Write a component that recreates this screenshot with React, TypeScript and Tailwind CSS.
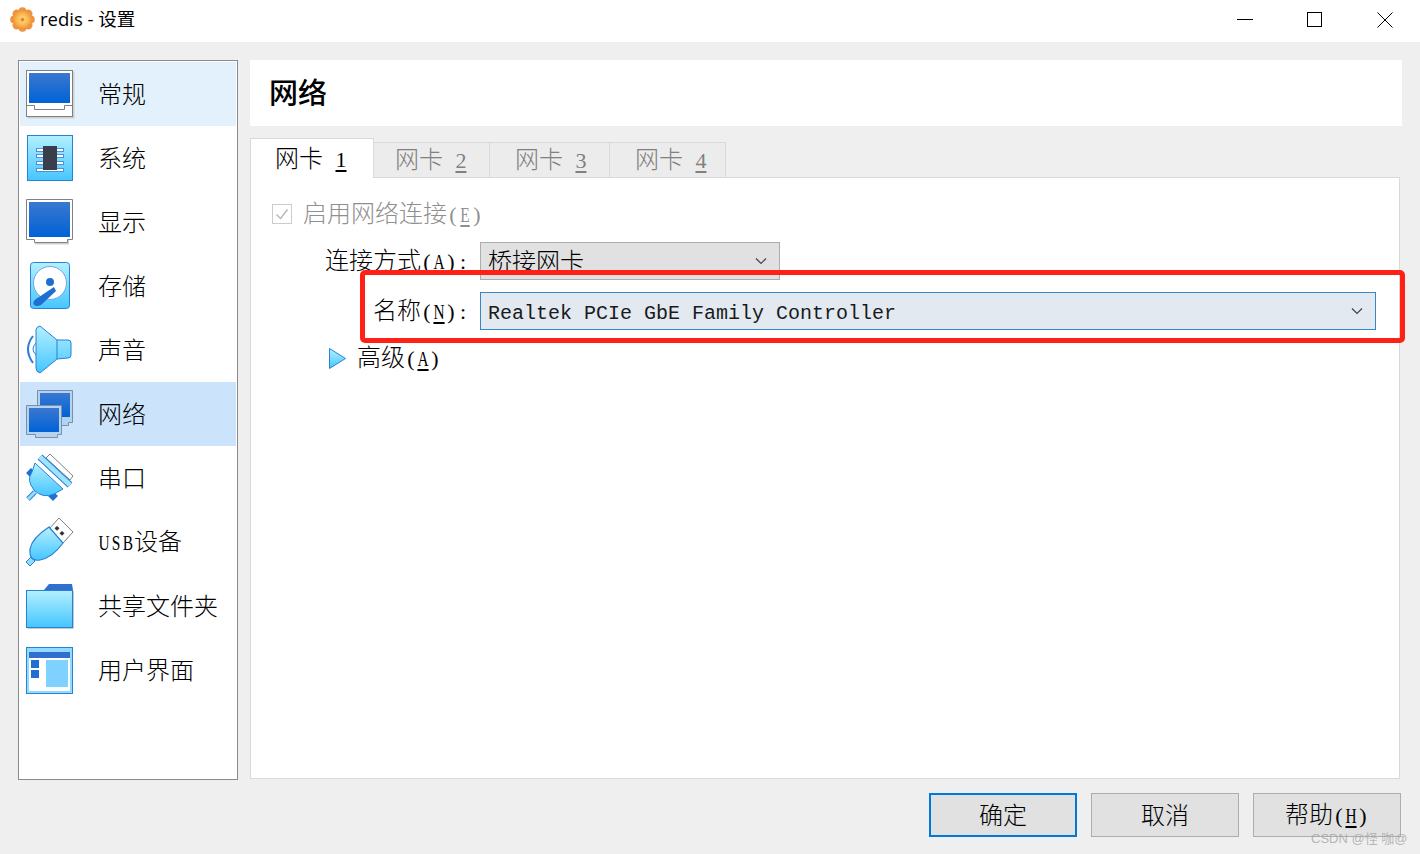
import type { ReactNode } from "react";

const cjk = "font-['Noto_Sans_CJK_SC',sans-serif] font-light";

// half-width monospaced run, for the combo text
function Mono({ children }: { children: ReactNode }) {
  return <span className="font-['Liberation_Mono',monospace] text-[20px] font-normal text-[#1a1a1a]">{children}</span>;
}

// one half-width serif cell: the reference's parens and letters sit in a 12px slot
function Cell({ children, u, narrow }: { children: ReactNode; u?: boolean; narrow?: boolean }) {
  return (
    <span
      className={`inline-flex justify-center w-[12px] font-['Liberation_Serif',serif] text-[22px] font-normal leading-none ${
        u ? "underline underline-offset-[3px]" : ""
      } ${narrow ? "scale-x-[0.7]" : ""}`}
    >
      {children}
    </span>
  );
}

function Key({ k }: { k: string }) {
  return (
    <>
      <Cell>(</Cell>
      <Cell u narrow>
        {k}
      </Cell>
      <Cell>)</Cell>
    </>
  );
}

function Chevron() {
  return (
    <svg width="12" height="8" viewBox="0 0 12 8" fill="none" stroke="#444" strokeWidth="1.2">
      <path d="M1 1.5 L6 6.5 L11 1.5" />
    </svg>
  );
}

function Defs() {
  return (
    <svg className="absolute w-0 h-0">
      <defs>
        <linearGradient id="screen" x1="0" y1="0" x2="0" y2="1">
          <stop offset="0" stopColor="#3a78d0" />
          <stop offset="1" stopColor="#0062d6" />
        </linearGradient>
        <linearGradient id="sky" x1="0" y1="0" x2="0" y2="1">
          <stop offset="0" stopColor="#b4f0ff" />
          <stop offset="1" stopColor="#44c6ff" />
        </linearGradient>
        <radialGradient id="gear" cx="0.5" cy="0.5" r="0.55">
          <stop offset="0" stopColor="#ffe08a" />
          <stop offset="0.6" stopColor="#f9b44c" />
          <stop offset="1" stopColor="#ea8a3a" />
        </radialGradient>
      </defs>
    </svg>
  );
}

function Ico({ children }: { children: ReactNode }) {
  return (
    <svg width="52" height="52" viewBox="0 0 52 52" className="shrink-0">
      {children}
    </svg>
  );
}

const icons: Record<string, ReactNode> = {
  general: (
    <Ico>
      <rect x="3.5" y="3.5" width="47" height="47" fill="#cfcfcf" />
      <rect x="2.5" y="2.5" width="46" height="46" fill="#fff" stroke="#808080" />
      <rect x="5" y="5" width="41" height="30" fill="url(#screen)" />
      <path d="M2.5 37.5 H10.5 V41.5 H40.5 V37.5 H48.5" fill="none" stroke="#808080" />
    </Ico>
  ),
  system: (
    <Ico>
      <rect x="3.5" y="3.5" width="45" height="45" fill="url(#sky)" stroke="#2a7fd6" />
      {[16, 22, 29, 36].map((y) => (
        <rect key={y} x="12.5" y={y + 0.5} width="27" height="3" fill="#fff" stroke="#4f8fd8" />
      ))}
      <rect x="19" y="14" width="14" height="24" fill="#3a3e4a" />
    </Ico>
  ),
  display: (
    <Ico>
      <path d="M11 44 V48.5 H45 V44 Z" fill="#cfcfcf" />
      <path d="M2.5 3.5 H48.5 V43.5 H43.5 V46.5 H10.5 V43.5 H2.5 Z" fill="#fff" stroke="#808080" />
      <rect x="5" y="6" width="41" height="35" fill="url(#screen)" />
    </Ico>
  ),
  storage: (
    <Ico>
      <rect x="6.5" y="2.5" width="39" height="46" rx="3" fill="url(#sky)" stroke="#2a7fd6" />
      <circle cx="26" cy="23" r="16.5" fill="#fff" stroke="#6fa8e0" />
      <circle cx="26" cy="22" r="4" fill="#1f6fd0" />
      <path d="M30 27 L32 31 L17 45 Q13 47 10 45 Q8 42 12 39 Z" fill="#1f6fd0" />
    </Ico>
  ),
  audio: (
    <Ico>
      <path d="M9 12 Q-1 25 9 39" fill="none" stroke="#2a7fd6" strokeWidth="2" />
      <path d="M12 19 Q6 25 12 31" fill="none" stroke="#2a7fd6" strokeWidth="1" />
      <path
        d="M16 2 L33 16 H44 Q47 16 47 19 V31 Q47 34 44 34 L33 35 L16 49 Q12 48 12 44 V6 Q12 3 16 2 Z"
        fill="url(#sky)"
        stroke="#2a7fd6"
      />
      <path d="M33 16 V35" stroke="#2a7fd6" />
    </Ico>
  ),
  network: (
    <Ico>
      <path d="M13.5 2.5 H48.5 V34.5 H44.5 V37.5 H13.5 Z" fill="#b3d3f0" stroke="#7a8fa5" />
      <rect x="16" y="5" width="30" height="24" fill="url(#screen)" />
      <path d="M2.5 17.5 H37.5 V46.5 H33.5 V49.5 H11.5 V46.5 H2.5 Z" fill="#b3d3f0" stroke="#7a8fa5" />
      <rect x="5" y="20" width="30" height="24" fill="url(#screen)" />
    </Ico>
  ),
  serial: (
    <Ico>
      <path d="M26 2 L49 24 L46 28 L22 6 Z" fill="#fff" stroke="#808080" />
      <path d="M4 47 L11 40" stroke="#2a7fd6" strokeWidth="5" />
      <path d="M4 47 L11 40" stroke="#8fdcff" strokeWidth="3" />
      <rect x="3.5" y="17.5" width="7" height="7" fill="#1f6fd0" transform="rotate(45 7 21)" />
      <rect x="25.5" y="40.5" width="7" height="7" fill="#1f6fd0" transform="rotate(45 29 44)" />
      <path d="M11 11 L39 37 L30 42 Q19 47 10 38 Q2 28 8 20 Z" fill="url(#sky)" stroke="#2a7fd6" />
      <path d="M16 5 L46 33" stroke="#2a7fd6" strokeWidth="7" />
      <path d="M16 5 L46 33" stroke="#9ee4ff" strokeWidth="5" />
    </Ico>
  ),
  usb: (
    <Ico>
      <path d="M35 2 L49 16 L39 27 L25 13 Z" fill="#fff" stroke="#808080" />
      <rect x="31.5" y="10.5" width="3.5" height="3.5" fill="#333" transform="rotate(45 33 12)" />
      <rect x="36.5" y="15.5" width="3.5" height="3.5" fill="#333" transform="rotate(45 38 17)" />
      <path d="M2 46 L7 41 L11 45 L6 50 Z" fill="#8fdcff" stroke="#2a7fd6" />
      <path d="M25 11 L39 27 Q28 42 16 44 Q5 46 6 33 Q8 22 25 11 Z" fill="url(#sky)" stroke="#2a7fd6" strokeWidth="1.2" />
    </Ico>
  ),
  shared: (
    <Ico>
      <path d="M20 10 L25 4 H48 L49 10 Z" fill="#2f6fd0" />
      <rect x="2.5" y="10.5" width="46" height="37" fill="url(#sky)" stroke="#2a7fd6" />
      <path d="M3.5 48.5 H49.5 V11" fill="none" stroke="#c8c8c8" />
    </Ico>
  ),
  ui: (
    <Ico>
      <rect x="2.5" y="3.5" width="46" height="46" fill="#8fdcff" stroke="#2a7fd6" />
      <rect x="5" y="8" width="41" height="39" fill="#fff" />
      <rect x="5" y="8" width="41" height="6" fill="#2f6fd0" />
      <rect x="7" y="16" width="8" height="8" fill="#1f6fd0" />
      <rect x="7" y="26" width="8" height="8" fill="#1f6fd0" />
      <rect x="22" y="16" width="22" height="27" fill="#7fd1ff" />
    </Ico>
  ),
};

const navItems: { key: string; label: ReactNode; bg?: string }[] = [
  { key: "general", label: "常规", bg: "bg-[#e3f1fc]" },
  { key: "system", label: "系统" },
  { key: "display", label: "显示" },
  { key: "storage", label: "存储" },
  { key: "audio", label: "声音" },
  { key: "network", label: "网络", bg: "bg-[#cce4fb]" },
  { key: "serial", label: "串口" },
  {
    key: "usb",
    label: (
      <>
        <Cell narrow>U</Cell>
        <Cell narrow>S</Cell>
        <Cell narrow>B</Cell>设备
      </>
    ),
  },
  { key: "shared", label: "共享文件夹" },
  { key: "ui", label: "用户界面" },
];

const tabs = [
  { n: "2", w: "w-[116px]", pad: "pl-[21px]" },
  { n: "3", w: "w-[120px]", pad: "pl-[25px]" },
  { n: "4", w: "w-[116px]", pad: "pl-[25px]" },
];

function Combo({ w, focus, children }: { w: string; focus?: boolean; children: ReactNode }) {
  return (
    <div
      className={`${w} h-[38px] flex items-center justify-between pl-[7px] pr-[12px] border ${
        focus ? "bg-[#e2e9f1] border-[#3a87c8]" : "bg-[#e1e1e1] border-[#adadad]"
      }`}
    >
      <span className="text-black leading-none whitespace-pre pb-[2px]">{children}</span>
      <Chevron />
    </div>
  );
}

function Btn({ children, primary }: { children: ReactNode; primary?: boolean }) {
  return (
    <div
      className={`w-[148px] h-[44px] flex items-center justify-center bg-[#e1e1e1] text-black ${
        primary ? "border-2 border-[#0078d7]" : "border border-[#adadad]"
      }`}
    >
      <span className="leading-none pb-[2px]">{children}</span>
    </div>
  );
}

export default function App() {
  return (
    <div className={`relative h-screen w-full overflow-hidden bg-[#efefef] flex flex-col text-[24px] text-black ${cjk}`}>
      <Defs />

      {/* Title bar */}
      <header className="h-[42px] shrink-0 bg-white flex items-center justify-between">
        <div className="flex items-center pl-[10px] gap-[5px] pb-[4px]">
          <svg width="25" height="25" viewBox="0 0 24 24">
            {[0, 45, 90, 135, 180, 225, 270, 315].map((a) => (
              <circle key={a} cx="12" cy="4" r="3.8" fill="#ee9440" transform={`rotate(${a} 12 12)`} />
            ))}
            <circle cx="12" cy="12" r="9" fill="url(#gear)" />
            <circle cx="12" cy="12" r="1.8" fill="#e8842c" />
          </svg>
          <span className="font-['Open_Sans','Noto_Sans_CJK_SC',sans-serif] font-normal text-[18.5px] leading-none text-black">
            redis - 设置
          </span>
        </div>
        <div className="flex pb-[2px]">
          <div className="w-[70px] h-[40px] flex items-center justify-center">
            <svg width="16" height="16" viewBox="0 0 16 16" stroke="#000" fill="none">
              <path d="M0 7.5 H16" />
            </svg>
          </div>
          <div className="w-[70px] h-[40px] flex items-center justify-center">
            <svg width="16" height="16" viewBox="0 0 16 16" stroke="#000" fill="none">
              <rect x="0.5" y="0.5" width="14" height="14" />
            </svg>
          </div>
          <div className="w-[70px] h-[40px] flex items-center justify-center">
            <svg width="16" height="16" viewBox="0 0 16 16" stroke="#000" fill="none">
              <path d="M0.5 0.5 L15.5 15.5 M15.5 0.5 L0.5 15.5" />
            </svg>
          </div>
        </div>
      </header>

      {/* Body */}
      <div className="flex gap-3 pl-[18px] pr-[18px] pt-[18px]">
        <aside className="w-[220px] h-[720px] shrink-0 bg-white border border-[#8a8a8a] px-px py-px">
          {navItems.map((item) => (
            <div key={item.key} className={`h-[64px] flex items-center pl-[4px] ${item.bg ?? ""}`}>
              {icons[item.key]}
              <span className="ml-[22px] leading-none whitespace-nowrap pb-[2px]">{item.label}</span>
            </div>
          ))}
        </aside>

        <main className="flex-1 min-w-0 flex flex-col">
          <div className="h-[66px] bg-white flex items-center pl-[19px]">
            <span className="text-[29px] leading-none font-medium pb-[4px]">网络</span>
          </div>

          {/* Tabs */}
          <div className="mt-3 h-[39px] flex items-end pr-[2px] relative z-10">
            <div className="w-[124px] h-[40px] -mb-px bg-white border border-b-0 border-[#d9d9d9] flex items-center pl-[24px]">
              <span className="leading-none whitespace-pre pb-[2px]">
                网卡<Cell> </Cell>
                <Cell u>1</Cell>
              </span>
            </div>
            {tabs.map((t) => (
              <div
                key={t.n}
                className={`${t.w} ${t.pad} h-[35px] bg-[#ececec] border border-l-0 border-b-0 border-[#d9d9d9] flex items-center text-[#808080]`}
              >
                <span className="leading-none whitespace-pre pb-[2px]">
                  网卡<Cell> </Cell>
                  <Cell u>{t.n}</Cell>
                </span>
              </div>
            ))}
          </div>

          {/* Panel */}
          <div className="h-[602px] mr-[2px] bg-white border border-[#d9d9d9]">
            <div className="pl-[21px] pt-[8px] flex items-center h-[64px] text-[#8f8f8f]">
              <div className="w-5 h-5 border border-[#cccccc] flex items-center justify-center">
                <svg width="16" height="16" viewBox="0 0 16 16" fill="none" stroke="#b4b4b4" strokeWidth="1.3">
                  <path d="M2.5 8.5 L6.5 12.5 L13.5 3.5" />
                </svg>
              </div>
              <span className="ml-[11px] leading-none whitespace-pre pb-[2px]">
                启用网络连接
                <Key k="E" />
              </span>
            </div>

            <div className="flex items-center h-[38px]">
              <div className="w-[218px] text-right leading-none whitespace-pre pb-[2px]">
                连接方式
                <Key k="A" />
                <Cell>:</Cell>
              </div>
              <div className="ml-[11px]">
                <Combo w="w-[300px]">桥接网卡</Combo>
              </div>
            </div>

            <div className="flex items-center h-[38px] mt-3">
              <div className="w-[218px] text-right leading-none whitespace-pre pb-[2px]">
                名称
                <Key k="N" />
                <Cell>:</Cell>
              </div>
              <div className="ml-[11px]">
                <Combo w="w-[896px]" focus>
                  <Mono>Realtek PCIe GbE Family Controller</Mono>
                </Combo>
              </div>
            </div>

            <div className="flex items-center h-[36px] mt-[10px] pl-[78px]">
              <svg width="17" height="21" viewBox="0 0 17 21">
                <path d="M0.5 0.5 L16.5 10.5 L0.5 20.5 Z" fill="url(#sky)" stroke="#2a7fd6" />
              </svg>
              <span className="ml-[11px] leading-none whitespace-pre pb-[2px]">
                高级
                <Key k="A" />
              </span>
            </div>
          </div>
        </main>
      </div>

      {/* Footer buttons */}
      <footer className="flex justify-end gap-[14px] pt-[13px] pr-[19px]">
        <Btn primary>确定</Btn>
        <Btn>取消</Btn>
        <Btn>
          帮助
          <Key k="H" />
        </Btn>
      </footer>

      {/* Red annotation drawn on top of the screenshot */}
      <div className="absolute left-[360px] top-[270px] w-[1045px] h-[73px] border-[5px] border-[#ff2116] rounded-[5px]" />

      {/* Watermark */}
      <span className="absolute left-[1311px] top-[832px] font-['Liberation_Sans','Noto_Sans_CJK_SC',sans-serif] font-normal text-[13px] leading-none text-[#a6a6a6]/80 whitespace-pre">
        CSDN @怪 咖@
      </span>
    </div>
  );
}
